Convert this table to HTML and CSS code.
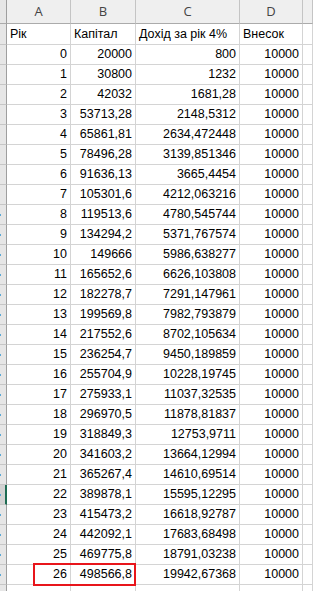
FILE: index.html
```html
<!DOCTYPE html>
<html lang="uk">
<head>
<meta charset="utf-8">
<link rel="stylesheet" href="styles.css">
</head>
<body>
<div class="sheet">
  <div class="row head"><div class="c strip"></div><div class="c a">A</div><div class="c b">B</div><div class="c cc">C</div><div class="c d">D</div><div class="c e"></div></div>
  <div class="row labels"><div class="c strip"></div><div class="c a txt">Рік</div><div class="c b txt">Капітал</div><div class="c cc txt">Дохід за рік 4%</div><div class="c d txt">Внесок</div><div class="c e"></div></div>
  <div class="row"><div class="c strip"></div><div class="c a num">0</div><div class="c b num">20000</div><div class="c cc num">800</div><div class="c d num">10000</div><div class="c e"></div></div>
  <div class="row"><div class="c strip"></div><div class="c a num">1</div><div class="c b num">30800</div><div class="c cc num">1232</div><div class="c d num">10000</div><div class="c e"></div></div>
  <div class="row"><div class="c strip"></div><div class="c a num">2</div><div class="c b num">42032</div><div class="c cc num">1681,28</div><div class="c d num">10000</div><div class="c e"></div></div>
  <div class="row"><div class="c strip"></div><div class="c a num">3</div><div class="c b num">53713,28</div><div class="c cc num">2148,5312</div><div class="c d num">10000</div><div class="c e"></div></div>
  <div class="row"><div class="c strip"></div><div class="c a num">4</div><div class="c b num">65861,81</div><div class="c cc num">2634,472448</div><div class="c d num">10000</div><div class="c e"></div></div>
  <div class="row"><div class="c strip"></div><div class="c a num">5</div><div class="c b num">78496,28</div><div class="c cc num">3139,851346</div><div class="c d num">10000</div><div class="c e"></div></div>
  <div class="row"><div class="c strip"></div><div class="c a num">6</div><div class="c b num">91636,13</div><div class="c cc num">3665,4454</div><div class="c d num">10000</div><div class="c e"></div></div>
  <div class="row"><div class="c strip"></div><div class="c a num">7</div><div class="c b num">105301,6</div><div class="c cc num">4212,063216</div><div class="c d num">10000</div><div class="c e"></div></div>
  <div class="row"><div class="c strip"><span class="tick"></span></div><div class="c a num">8</div><div class="c b num">119513,6</div><div class="c cc num">4780,545744</div><div class="c d num">10000</div><div class="c e"></div></div>
  <div class="row"><div class="c strip"><span class="tick"></span></div><div class="c a num">9</div><div class="c b num">134294,2</div><div class="c cc num">5371,767574</div><div class="c d num">10000</div><div class="c e"></div></div>
  <div class="row"><div class="c strip"><span class="tick"></span></div><div class="c a num">10</div><div class="c b num">149666</div><div class="c cc num">5986,638277</div><div class="c d num">10000</div><div class="c e"></div></div>
  <div class="row"><div class="c strip"><span class="tick"></span></div><div class="c a num">11</div><div class="c b num">165652,6</div><div class="c cc num">6626,103808</div><div class="c d num">10000</div><div class="c e"></div></div>
  <div class="row"><div class="c strip"><span class="tick"></span></div><div class="c a num">12</div><div class="c b num">182278,7</div><div class="c cc num">7291,147961</div><div class="c d num">10000</div><div class="c e"></div></div>
  <div class="row"><div class="c strip"><span class="tick"></span></div><div class="c a num">13</div><div class="c b num">199569,8</div><div class="c cc num">7982,793879</div><div class="c d num">10000</div><div class="c e"></div></div>
  <div class="row"><div class="c strip"><span class="tick"></span></div><div class="c a num">14</div><div class="c b num">217552,6</div><div class="c cc num">8702,105634</div><div class="c d num">10000</div><div class="c e"></div></div>
  <div class="row"><div class="c strip"><span class="tick"></span></div><div class="c a num">15</div><div class="c b num">236254,7</div><div class="c cc num">9450,189859</div><div class="c d num">10000</div><div class="c e"></div></div>
  <div class="row"><div class="c strip"><span class="tick"></span></div><div class="c a num">16</div><div class="c b num">255704,9</div><div class="c cc num">10228,19745</div><div class="c d num">10000</div><div class="c e"></div></div>
  <div class="row"><div class="c strip"><span class="tick"></span></div><div class="c a num">17</div><div class="c b num">275933,1</div><div class="c cc num">11037,32535</div><div class="c d num">10000</div><div class="c e"></div></div>
  <div class="row"><div class="c strip"><span class="tick"></span></div><div class="c a num">18</div><div class="c b num">296970,5</div><div class="c cc num">11878,81837</div><div class="c d num">10000</div><div class="c e"></div></div>
  <div class="row"><div class="c strip"><span class="tick"></span></div><div class="c a num">19</div><div class="c b num">318849,3</div><div class="c cc num">12753,9711</div><div class="c d num">10000</div><div class="c e"></div></div>
  <div class="row"><div class="c strip"><span class="tick"></span></div><div class="c a num">20</div><div class="c b num">341603,2</div><div class="c cc num">13664,12994</div><div class="c d num">10000</div><div class="c e"></div></div>
  <div class="row"><div class="c strip"><span class="tick"></span></div><div class="c a num">21</div><div class="c b num">365267,4</div><div class="c cc num">14610,69514</div><div class="c d num">10000</div><div class="c e"></div></div>
  <div class="row"><div class="c strip sel"><span class="tick"></span></div><div class="c a num">22</div><div class="c b num">389878,1</div><div class="c cc num">15595,12295</div><div class="c d num">10000</div><div class="c e"></div></div>
  <div class="row"><div class="c strip"><span class="tick"></span></div><div class="c a num">23</div><div class="c b num">415473,2</div><div class="c cc num">16618,92787</div><div class="c d num">10000</div><div class="c e"></div></div>
  <div class="row"><div class="c strip"><span class="tick"></span></div><div class="c a num">24</div><div class="c b num">442092,1</div><div class="c cc num">17683,68498</div><div class="c d num">10000</div><div class="c e"></div></div>
  <div class="row"><div class="c strip"><span class="tick"></span></div><div class="c a num">25</div><div class="c b num">469775,8</div><div class="c cc num">18791,03238</div><div class="c d num">10000</div><div class="c e"></div></div>
  <div class="row"><div class="c strip"><span class="tick"></span></div><div class="c a num">26</div><div class="c b num">498566,8</div><div class="c cc num">19942,67368</div><div class="c d num">10000</div><div class="c e"></div></div>
  <div class="row"><div class="c strip"></div><div class="c a"></div><div class="c b"></div><div class="c cc"></div><div class="c d"></div><div class="c e"></div></div>
  <div class="mark"></div>
</div>
</body>
</html>
```
FILE: styles.css
```css
html,body{margin:0;padding:0;background:#fff;}
.sheet{position:relative;width:313px;height:591px;overflow:hidden;font-family:"Liberation Sans",Arial,sans-serif;font-size:12.5px;color:#000;}
.row{display:flex;height:20px;}
.row .c{box-sizing:border-box;height:100%;border-right:1px solid #d4d4d4;border-bottom:1px solid #d4d4d4;flex:none;line-height:19px;white-space:nowrap;overflow:hidden;}
.row .strip{width:7px;background:#e6e6e6;border-right:1px solid #9e9e9e;border-bottom-color:#c6c6c6;position:relative;}
.row .strip.sel{background:#d2d2d2;border-right:2px solid #1e6b52;}
.tick{position:absolute;left:0;top:9px;width:1px;height:2px;background:#5aa9d6;}
.a{width:64px;}
.b{width:65px;}
.cc{width:104px;}
.d{width:63px;}
.row .e{flex:1 1 auto;}
.row.head{height:24px;}
.row.head .c{background:#efefef;border-right-color:#c4c4c4;border-bottom-color:#ababab;text-align:center;line-height:23px;font-family:"Open Sans","Liberation Sans",sans-serif;font-size:13px;color:#444;}
.row.head .strip{background:#e6e6e6;border-right-color:#9e9e9e;}
.row.labels{height:21px;}
.row.labels .c{line-height:20px;}
.txt{padding-left:3px;}
.num{text-align:right;padding-right:3px;}
.mark{position:absolute;left:33px;top:563px;width:99px;height:19px;border:2px solid #e8151b;}
```
